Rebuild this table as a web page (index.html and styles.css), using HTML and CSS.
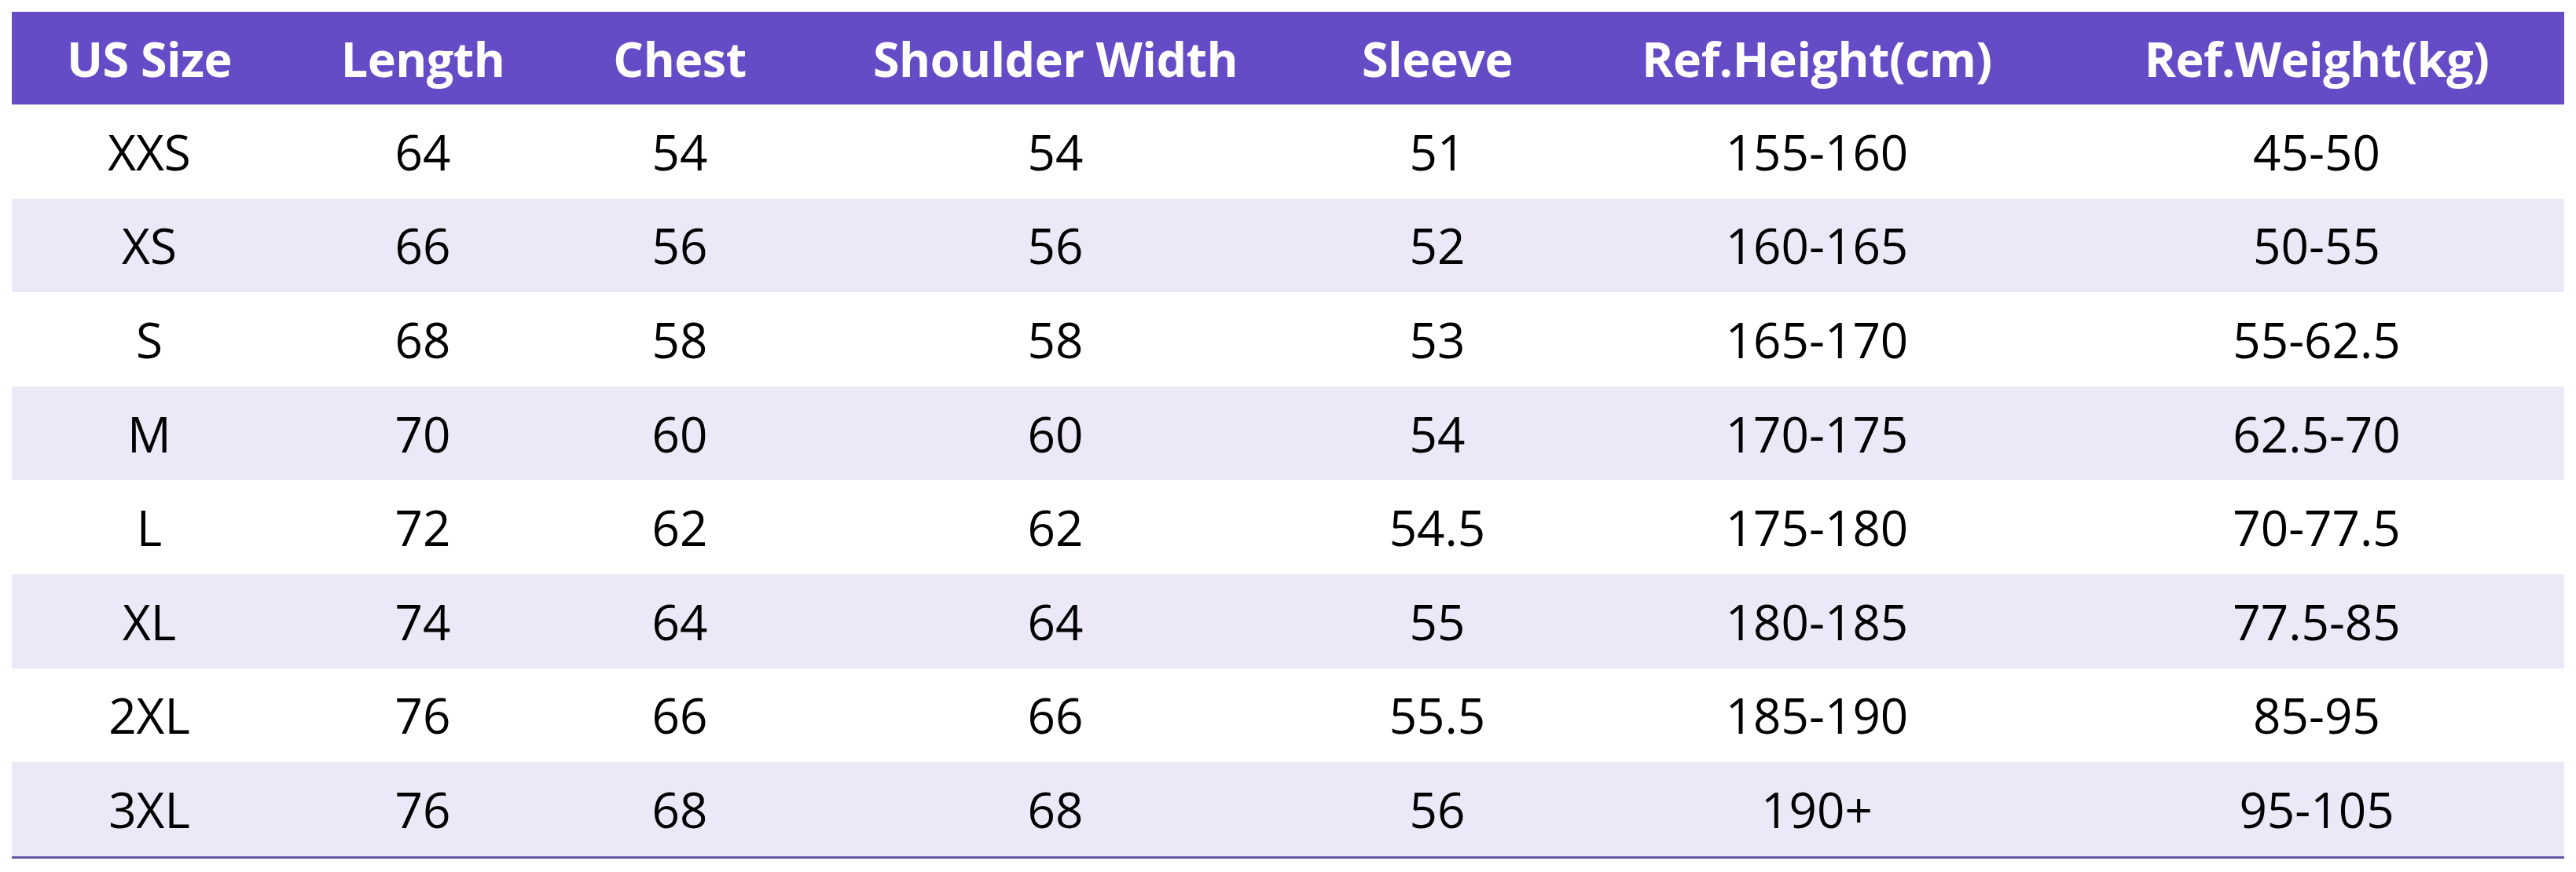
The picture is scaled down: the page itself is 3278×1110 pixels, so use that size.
FILE: index.html
```html
<!DOCTYPE html>
<html lang="en">
<head>
<meta charset="utf-8">
<title>Size Chart</title>
<link rel="stylesheet" href="styles.css">
</head>
<body>
<div class="chart">
  <div class="row head">
    <div class="cell">US Size</div><div class="cell">Length</div><div class="cell">Chest</div><div class="cell">Shoulder Width</div><div class="cell">Sleeve</div><div class="cell">Ref.Height(cm)</div><div class="cell">Ref.Weight(kg)</div>
  </div>
  <div class="row">
    <div class="cell">XXS</div><div class="cell">64</div><div class="cell">54</div><div class="cell">54</div><div class="cell">51</div><div class="cell">155-160</div><div class="cell">45-50</div>
  </div>
  <div class="row alt">
    <div class="cell">XS</div><div class="cell">66</div><div class="cell">56</div><div class="cell">56</div><div class="cell">52</div><div class="cell">160-165</div><div class="cell">50-55</div>
  </div>
  <div class="row">
    <div class="cell">S</div><div class="cell">68</div><div class="cell">58</div><div class="cell">58</div><div class="cell">53</div><div class="cell">165-170</div><div class="cell">55-62.5</div>
  </div>
  <div class="row alt">
    <div class="cell">M</div><div class="cell">70</div><div class="cell">60</div><div class="cell">60</div><div class="cell">54</div><div class="cell">170-175</div><div class="cell">62.5-70</div>
  </div>
  <div class="row">
    <div class="cell">L</div><div class="cell">72</div><div class="cell">62</div><div class="cell">62</div><div class="cell">54.5</div><div class="cell">175-180</div><div class="cell">70-77.5</div>
  </div>
  <div class="row alt">
    <div class="cell">XL</div><div class="cell">74</div><div class="cell">64</div><div class="cell">64</div><div class="cell">55</div><div class="cell">180-185</div><div class="cell">77.5-85</div>
  </div>
  <div class="row">
    <div class="cell">2XL</div><div class="cell">76</div><div class="cell">66</div><div class="cell">66</div><div class="cell">55.5</div><div class="cell">185-190</div><div class="cell">85-95</div>
  </div>
  <div class="row alt last">
    <div class="cell">3XL</div><div class="cell">76</div><div class="cell">68</div><div class="cell">68</div><div class="cell">56</div><div class="cell">190+</div><div class="cell">95-105</div>
  </div>
</div>
</body>
</html>
```
FILE: styles.css
```css
html, body {
  margin: 0;
  padding: 0;
  background: #ffffff;
}

body {
  padding: 15px 0 0 15px;
  font-family: "Open Sans", "Noto Sans", sans-serif;
  color: #000000;
}

.chart {
  width: 3248px;
  display: flex;
  flex-direction: column;
}

.row {
  display: grid;
  grid-template-columns: 350px 346px 308px 648px 324px 642px 630px;
  height: 119.6px;
  align-items: center;
  font-size: 62px;
  font-weight: 400;
}

.row.head {
  height: 118px;
  background: #664bc6;
  color: #ffffff;
  font-size: 61px;
  font-weight: 700;
  letter-spacing: -0.5px;
}

.row.alt {
  background: #ece8f8;
}

.row.last {
  border-bottom: 3px solid #6658a0;
}

.cell {
  text-align: center;
  white-space: nowrap;
  line-height: 1;
}
```
